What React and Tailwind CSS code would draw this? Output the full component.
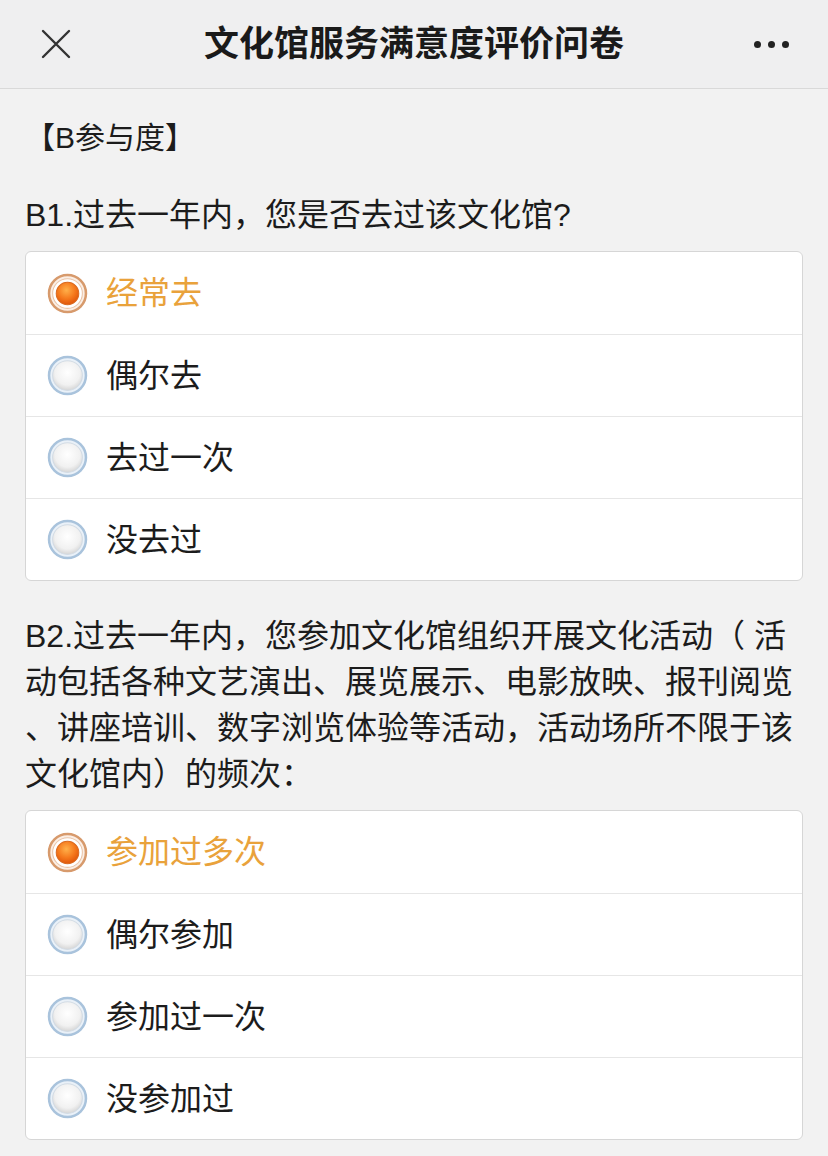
import React, { useState } from 'react';

const FONT = { fontFamily: '"Liberation Sans", "Noto Sans CJK SC", sans-serif' };

const QUESTIONS = [
  {
    id: 'b1',
    lines: ['B1.过去一年内，您是否去过该文化馆?'],
    options: ['经常去', '偶尔去', '去过一次', '没去过'],
  },
  {
    id: 'b2',
    lines: [
      'B2.过去一年内，您参加文化馆组织开展文化活动（ 活',
      '动包括各种文艺演出、展览展示、电影放映、报刊阅览',
      '、讲座培训、数字浏览体验等活动，活动场所不限于该',
      '文化馆内）的频次：',
    ],
    options: ['参加过多次', '偶尔参加', '参加过一次', '没参加过'],
  },
];

const Radio = ({ checked }) => (
  <svg width="41" height="41" viewBox="0 0 40 40" className="shrink-0">
    <defs>
      <radialGradient id="offFill" cx="50%" cy="40%" r="60%">
        <stop offset="0%" stopColor="#ffffff" />
        <stop offset="70%" stopColor="#f1f1f1" />
        <stop offset="100%" stopColor="#d6d6d6" />
      </radialGradient>
      <radialGradient id="onFill" cx="45%" cy="35%" r="65%">
        <stop offset="0%" stopColor="#ffb04a" />
        <stop offset="60%" stopColor="#f5781c" />
        <stop offset="100%" stopColor="#e0560a" />
      </radialGradient>
    </defs>
    {checked ? (
      <>
        <circle cx="20" cy="20" r="18" fill="#fbeee4" stroke="#d79a6c" strokeWidth="2.5" />
        <circle cx="20" cy="20" r="14.5" fill="#ffffff" stroke="#e9c3a6" strokeWidth="1" />
        <circle cx="20" cy="20" r="11" fill="url(#onFill)" stroke="#d96a20" strokeWidth="1" />
      </>
    ) : (
      <>
        <circle cx="20" cy="20" r="18" fill="#eaf1f8" stroke="#a9c3dc" strokeWidth="2.5" />
        <circle cx="20" cy="20" r="14.5" fill="url(#offFill)" stroke="#d2dbe4" strokeWidth="1" />
      </>
    )}
  </svg>
);

const Question = ({ q, value, onChange }) => (
  <div>
    <div className="text-[32px] leading-[46px] text-[#1c1c1c]">
      {q.lines.map((l) => (
        <div key={l} className="whitespace-nowrap">{l}</div>
      ))}
    </div>
    <div className="mt-[13px] bg-white border border-[#d6d6d6] rounded-[6px] overflow-hidden">
      {q.options.map((opt, i) => (
        <button
          key={opt}
          onClick={() => onChange(i)}
          className={`w-full h-[82px] flex items-center pl-[21px] gap-[18px] text-left ${i > 0 ? 'border-t border-[#e6e6e6]' : ''}`}
        >
          <Radio checked={value === i} />
          <span className={`text-[32px] ${value === i ? 'text-[#e9a23b]' : 'text-[#1c1c1c]'}`}>{opt}</span>
        </button>
      ))}
    </div>
  </div>
);

export default function App() {
  const [answers, setAnswers] = useState({ b1: 0, b2: 0 });

  return (
    <div className="min-h-screen w-[828px] bg-[#f2f2f2]" style={FONT}>
      <div className="h-[89px] bg-[#efeff0] border-b border-[#d9d9d9] flex items-center justify-between px-[40px] relative">
        <svg width="34" height="34" viewBox="0 0 34 34" className="-ml-[1px]">
          <path d="M4 4 L30 30 M30 4 L4 30" stroke="#333" strokeWidth="2.4" strokeLinecap="round" />
        </svg>
        <h1 className="absolute left-0 right-0 text-center text-[35px] font-semibold text-[#1a1a1a] pointer-events-none">
          文化馆服务满意度评价问卷
        </h1>
        <div className="flex gap-[7px] mr-[-1px]">
          <span className="w-[7px] h-[7px] rounded-full bg-[#222]" />
          <span className="w-[7px] h-[7px] rounded-full bg-[#222]" />
          <span className="w-[7px] h-[7px] rounded-full bg-[#222]" />
        </div>
      </div>

      <div className="px-[25px]">
        <div className="pt-[26px] text-[30px] leading-[46px] text-[#1c1c1c]">【B参与度】</div>
        <div className="mt-[31px] flex flex-col gap-[32px]">
          {QUESTIONS.map((q) => (
            <Question
              key={q.id}
              q={q}
              value={answers[q.id]}
              onChange={(i) => setAnswers({ ...answers, [q.id]: i })}
            />
          ))}
        </div>
      </div>
    </div>
  );
}
